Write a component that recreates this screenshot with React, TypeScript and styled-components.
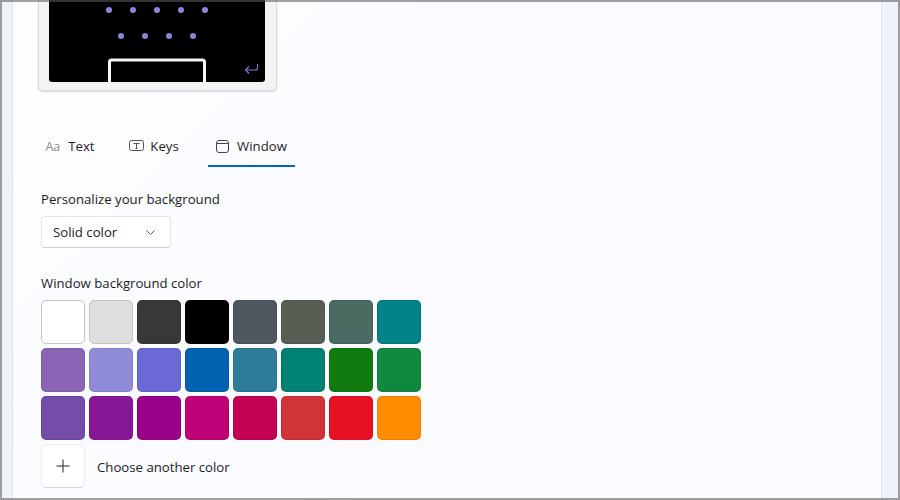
import styled, { createGlobalStyle } from 'styled-components';

const GlobalStyle = createGlobalStyle`
  html, body {
    margin: 0;
    padding: 0;
    background: #fff;
  }
  body {
    font-family: 'Open Sans', 'Noto Sans', sans-serif;
    color: #1b1b1b;
  }
`;

const Frame = styled.div`
  position: relative;
  display: flex;
  width: 900px;
  height: 500px;
  overflow: hidden;
  &::after {
    content: '';
    position: absolute;
    inset: 0;
    border: 2px solid rgba(89, 89, 89, 0.57);
    pointer-events: none;
  }
`;

const SideStrip = styled.div<{ $width: number; $side: 'left' | 'right' }>`
  box-sizing: border-box;
  flex: 0 0 ${(props) => props.$width}px;
  background: #eef3f9;
  border-${(props) => (props.$side === 'left' ? 'right' : 'left')}: 1px solid #dde3ec;
`;

const Panel = styled.div`
  flex: 1;
  display: flex;
  flex-direction: column;
  align-items: flex-start;
  padding-left: 28px;
  background: linear-gradient(135deg, #fbfdff 0%, #fafaff 100%);
`;

const PreviewCard = styled.div`
  box-sizing: border-box;
  width: 239px;
  height: 91px;
  margin-left: -3px;
  padding: 0 10px 9px;
  background: #f3f3f3;
  border: 1px solid #dcdcdc;
  border-top: 0;
  border-radius: 0 0 5px 5px;
  box-shadow: 0 1px 2px rgba(0, 0, 0, 0.16);
`;

const KeyboardArt = styled.svg`
  display: block;
  width: 216px;
  height: 82px;
`;

const Tabs = styled.div`
  display: flex;
  align-items: stretch;
  gap: 20px;
  height: 34px;
  margin-top: 42px;
  margin-left: -1px;
`;

const Tab = styled.div<{ $active?: boolean; $width: number; $gap: number }>`
  position: relative;
  box-sizing: border-box;
  display: flex;
  align-items: center;
  justify-content: center;
  gap: ${(props) => props.$gap}px;
  width: ${(props) => props.$width}px;
  padding-bottom: 8px;
  font-size: 13.2px;
  color: #1f1f1f;
  &::after {
    content: '';
    display: ${(props) => (props.$active ? 'block' : 'none')};
    position: absolute;
    left: 0;
    right: 0;
    bottom: 0;
    height: 2px;
    background: #0067c0;
  }
`;

const AaGlyph = styled.span`
  font-size: 12.5px;
  color: #8a8a8a;
`;

const FieldLabel = styled.div<{ $top: number }>`
  margin-top: ${(props) => props.$top}px;
  font-size: 13.2px;
  line-height: 18px;
  color: #1b1b1b;
`;

const Dropdown = styled.div`
  box-sizing: border-box;
  display: flex;
  align-items: center;
  justify-content: space-between;
  width: 130px;
  height: 32px;
  margin-top: 8px;
  padding: 0 15px 0 11px;
  background: #fff;
  border: 1px solid #e6e6e6;
  border-bottom-color: #cfcfcf;
  border-radius: 4px;
  font-size: 13.2px;
  color: #222;
`;

const SwatchGrid = styled.div`
  display: grid;
  grid-template-columns: repeat(8, 44px);
  grid-auto-rows: 44px;
  gap: 4px;
  margin-top: 8px;
`;

const Swatch = styled.div<{ $color: string; $edge?: string }>`
  box-sizing: border-box;
  background: ${(props) => props.$color};
  border: 1px solid ${(props) => props.$edge ?? 'rgba(0, 0, 0, 0.08)'};
  border-radius: 5px;
`;

const ChooseRow = styled.div`
  display: flex;
  align-items: center;
  gap: 12px;
  margin-top: 4px;
  font-size: 13.2px;
  color: #222;
`;

const ChooseLabel = styled.span`
  margin-top: 2px;
`;

const PlusButton = styled.div`
  box-sizing: border-box;
  display: flex;
  align-items: center;
  justify-content: center;
  width: 44px;
  height: 44px;
  background: #fff;
  border: 1px solid #ececec;
  border-bottom-color: #d6d6d6;
  border-radius: 5px;
`;

const swatches = [
  '#ffffff', '#dedede', '#383838', '#000000', '#4e565e', '#575f55', '#4a6b62', '#038387',
  '#8a64b5', '#8f8bd8', '#6b69d6', '#0063b1', '#2d7d9a', '#008272', '#107c10', '#10893e',
  '#744da9', '#881798', '#9a0089', '#bf0077', '#c30052', '#d13438', '#e81123', '#ff8c00',
];

const row1 = [109, 133, 157, 181, 205];
const row2 = [121, 145, 169, 193];

function App() {
  return (
    <Frame>
      <GlobalStyle />
      <SideStrip $width={13} $side="left" />
      <Panel>
        <PreviewCard>
          <KeyboardArt viewBox="49 0 216 82">
            <path d="M49 0H265V79a3 3 0 0 1-3 3H52a3 3 0 0 1-3-3Z" fill="#000" />
            {row1.map((x) => (
              <circle key={x} cx={x} cy={10} r={3} fill="#8a86d8" />
            ))}
            {row2.map((x) => (
              <circle key={x} cx={x} cy={36} r={3} fill="#8a86d8" />
            ))}
            <path d="M109.5 82V62a2 2 0 0 1 2-2h91a2 2 0 0 1 2 2V82" fill="none" stroke="#f5f5f5" strokeWidth="3" />
            <path d="M257.5 64v4a2 2 0 0 1-2 2H245.5M249 66.5 245.5 70l3.5 3.5" fill="none" stroke="#7d79cc" strokeWidth="1.1" />
          </KeyboardArt>
        </PreviewCard>

        <Tabs>
          <Tab $width={60} $gap={8}>
            <AaGlyph>Aa</AaGlyph>
            <span>Text</span>
          </Tab>
          <Tab $width={68} $gap={6}>
            <svg width="15" height="12" viewBox="0 0 15 12" fill="none" stroke="#555" strokeWidth="1">
              <rect x="0.5" y="0.5" width="14" height="10" rx="2" />
              <path d="M4.5 3.5h6M7.5 3.5v5M6.5 8.5h2" />
            </svg>
            <span>Keys</span>
          </Tab>
          <Tab $active $width={87} $gap={8}>
            <svg width="13" height="13" viewBox="0 0 13 13" fill="none" stroke="#444" strokeWidth="1">
              <rect x="0.5" y="0.5" width="12" height="12" rx="2.5" />
              <path d="M0.5 3.5h12" />
            </svg>
            <span>Window</span>
          </Tab>
        </Tabs>

        <FieldLabel $top={23}>Personalize your background</FieldLabel>
        <Dropdown>
          <span>Solid color</span>
          <svg width="9" height="5" viewBox="0 0 9 5" fill="none" stroke="#555" strokeWidth="1">
            <path d="M0.5 0.5 4.5 4.5l4-4" />
          </svg>
        </Dropdown>

        <FieldLabel $top={26}>Window background color</FieldLabel>
        <SwatchGrid>
          {swatches.map((color, index) => (
            <Swatch key={index} $color={color} $edge={index < 2 ? '#c4c4c4' : undefined} />
          ))}
        </SwatchGrid>

        <ChooseRow>
          <PlusButton>
            <svg width="14" height="14" viewBox="0 0 14 14" fill="none" stroke="#222" strokeWidth="1">
              <path d="M7 0.5v13M0.5 7h13" />
            </svg>
          </PlusButton>
          <ChooseLabel>Choose another color</ChooseLabel>
        </ChooseRow>
      </Panel>
      <SideStrip $width={19} $side="right" />
    </Frame>
  );
}

export default App;
